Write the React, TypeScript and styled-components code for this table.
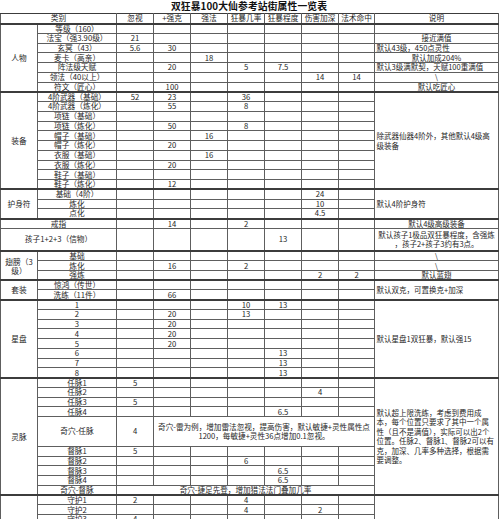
import React from "react";
import styled, { createGlobalStyle, css } from "styled-components";

const GlobalStyle = createGlobalStyle`
  html, body {
    margin: 0;
    padding: 0;
    background: #fff;
    overflow: hidden;
  }
  body {
    font-family: "Noto Sans CJK SC", "Noto Sans", sans-serif;
    color: #1e1e1e;
  }
`;

type Align = "left" | "center";

type RowDef = {
  group?: { text: string; span: number };
  item: string;
  wideItem?: boolean;
  vals?: string[];
  wide?: { from: number; text: string };
  note?: { text: string; span?: number; align?: Align };
  h?: number;
  sep?: boolean;
};

const E = "";
const ROW = 9.75;

const headers = ["忽视", "+强克", "强法", "狂暴几率", "狂暴程度", "伤害加深", "法术命中"];
const colWidths = [37, 79, 37, 37, 37, 37, 37, 37, 36, 124];

const rows: RowDef[] = [
  // 人物
  { group: { text: "人物", span: 7 }, item: "等级（160）", note: { text: "" }, sep: true },
  { item: "法宝（强3.90级）", vals: ["21"], note: { text: "接近满值" } },
  { item: "玄冥（43）", vals: ["5.6", "30"], note: { text: "默认43级，450点灵性", align: "left" } },
  { item: "麦卡（高亲）", vals: [E, E, "18"], note: { text: "默认加成204%" } },
  { item: "阵法级天赋", vals: [E, "20", E, "5", "7.5"], note: { text: "默认3级满默契，天赋100重满值", align: "left" } },
  { item: "领法（40以上）", vals: [E, E, E, E, E, "14", "14"], note: { text: "\\" } },
  { item: "符文（匠心）", vals: [E, "100"], note: { text: "默认吃匠心" } },
  // 装备
  {
    group: { text: "装备", span: 10 },
    item: "4阶武器（基础）",
    vals: ["52", "23", E, "36"],
    note: { text: "除武器仙器4阶外，其他默认4级高\n级装备", span: 10, align: "left" },
    sep: true,
  },
  { item: "4阶武器（炼化）", vals: [E, "55", E, "8"] },
  { item: "项链（基础）" },
  { item: "项链（炼化）", vals: [E, "50", E, "8"] },
  { item: "帽子（基础）", vals: [E, E, "16"] },
  { item: "帽子（炼化）", vals: [E, "20"] },
  { item: "衣服（基础）", vals: [E, E, "16"] },
  { item: "衣服（炼化）", vals: [E, "20"] },
  { item: "鞋子（基础）" },
  { item: "鞋子（炼化）", vals: [E, "12"] },
  // 护身符
  {
    group: { text: "护身符", span: 3 },
    item: "基础（4阶）",
    vals: [E, E, E, E, E, "24"],
    note: { text: "默认4阶护身符", span: 3, align: "left" },
    sep: true,
  },
  { item: "炼化", vals: [E, E, E, E, E, "10"] },
  { item: "点化", vals: [E, E, E, E, E, "4.5"] },
  // 戒指 / 孩子
  { item: "戒指", wideItem: true, vals: [E, "14", E, "2"], note: { text: "默认4级高级装备" }, sep: true },
  {
    item: "孩子1+2+3（信物）",
    wideItem: true,
    vals: [E, E, E, E, "13"],
    note: { text: "默认孩子1极品双狂暴程度，含强炼\n，孩子2+孩子3约有3点。" },
    h: 22.7,
  },
  // 翅膀
  { group: { text: "翅膀（3级）", span: 3 }, item: "基础", note: { text: "\\" }, sep: true },
  { item: "炼化", vals: [E, "16", E, "2"], note: { text: "\\" } },
  { item: "强炼", vals: [E, E, E, E, E, "2", "2"], note: { text: "默认蓝翅" } },
  // 套装
  {
    group: { text: "套装", span: 2 },
    item: "惊鸿（传世）",
    note: { text: "默认双克，可置换克+加深", span: 2, align: "left" },
    sep: true,
  },
  { item: "洗练（11件）", vals: [E, "66"] },
  // 星盘
  {
    group: { text: "星盘", span: 8 },
    item: "1",
    vals: [E, E, E, "10", "13"],
    note: { text: "默认星盘1双狂暴，默认强15", span: 8, align: "left" },
    sep: true,
  },
  { item: "2", vals: [E, "20", E, "13"] },
  { item: "3", vals: [E, "20"] },
  { item: "4", vals: [E, "20"] },
  { item: "5", vals: [E, "20"] },
  { item: "6", vals: [E, E, E, E, "13"] },
  { item: "7", vals: [E, E, E, E, "13"] },
  { item: "8", vals: [E, E, E, E, "13"] },
  // 灵脉
  {
    group: { text: "灵脉", span: 10 },
    item: "任脉1",
    vals: ["5"],
    note: {
      text:
        "默认超上限洗练，考虑到费用成\n本，每个位置只要求了其中一个属\n性（且不是满值），实际可以出2个\n位置。任脉2、督脉1、督脉2可以有\n克，加深、几率多种选择，根据需\n要调整。",
      span: 10,
      align: "left",
    },
    sep: true,
  },
  { item: "任脉2", vals: [E, E, E, E, E, "4"] },
  { item: "任脉3", vals: ["5"] },
  { item: "任脉4", vals: [E, E, E, E, "6.5"] },
  {
    item: "奇穴-任脉",
    vals: ["4"],
    wide: {
      from: 1,
      text: "奇穴-雷为例，增加雷法忽视，提高伤害，默认敏捷+灵性属性点\n1200，每敏捷+灵性36点增加0.1忽视。",
    },
    h: 29.6,
  },
  { item: "督脉1", vals: ["5"] },
  { item: "督脉2", vals: [E, E, E, "6"] },
  { item: "督脉3", vals: [E, E, E, E, "6.5"] },
  { item: "督脉4", vals: [E, E, E, E, "6.5"] },
  { item: "奇穴-督脉", wide: { from: 0, text: "奇穴-捷足先登，增加猎法法门叠加几率" } },
  // 守护
  {
    group: { text: "守护", span: 6 },
    item: "守护1",
    vals: ["2", E, E, "4"],
    note: { text: "", span: 6 },
    sep: true,
  },
  { item: "守护2", vals: [E, E, E, "4", E, "2"] },
  { item: "守护3", vals: ["4"] },
  { item: "守护4" },
  { item: "守护5" },
  { item: "奇穴-守护" },
];

const Page = styled.div`
  width: 498px;
`;

const Title = styled.div`
  height: 13px;
  line-height: 13px;
  font-size: 9.8px;
  font-weight: 700;
  text-align: center;
  color: #111;
  letter-spacing: 0.1px;
`;

const Sheet = styled.table`
  width: 498px;
  table-layout: fixed;
  border-collapse: collapse;
`;

const Col = styled.col<{ $w: number }>`
  width: ${(p) => p.$w}px;
`;

const Row = styled.tr<{ $h: number; $sep?: boolean }>`
  height: ${(p) => p.$h}px;
  ${(p) =>
    p.$sep &&
    css`
      & > td {
        border-top: 2px solid #3c3c3c;
      }
    `}
`;

const Cell = styled.td<{ $align?: Align; $multi?: boolean }>`
  border: 1px solid #5e5e5e;
  padding: 0 1px;
  font-size: 7.7px;
  line-height: ${(p) => (p.$multi ? "9.5px" : "8px")};
  text-align: ${(p) => p.$align ?? "center"};
  vertical-align: middle;
  white-space: pre-line;
  overflow: hidden;
`;

const HeadCell = styled(Cell)`
  border-top: 1px solid #3c3c3c;
`;

const GroupCell = styled(Cell)`
  padding: 0 2px;
  line-height: 9px;
`;

const NoteCell = styled(Cell)`
  font-size: 7.5px;
  padding: 0 0 0 ${(p) => (p.$align === "left" ? "1.5px" : "0")};
`;

const WideCell = styled(Cell)`
  font-size: 7.6px;
`;

function SheetRow({ r }: { r: RowDef }) {
  const vals = r.vals ?? [];
  const valCells: React.ReactNode[] = [];
  const end = r.wide ? r.wide.from : 7;
  for (let i = 0; i < end; i++) valCells.push(<Cell key={i}>{vals[i] ?? ""}</Cell>);
  return (
    <Row $h={r.h ?? ROW} $sep={r.sep}>
      {r.group && <GroupCell rowSpan={r.group.span}>{r.group.text}</GroupCell>}
      <Cell colSpan={r.wideItem ? 2 : 1}>{r.item}</Cell>
      {valCells}
      {r.wide && (
        <WideCell colSpan={7 - r.wide.from} $multi={r.wide.text.includes("\n")}>
          {r.wide.text}
        </WideCell>
      )}
      {r.note && (
        <NoteCell rowSpan={r.note.span ?? 1} $align={r.note.align} $multi={r.note.text.includes("\n")}>
          {r.note.text}
        </NoteCell>
      )}
    </Row>
  );
}

export default function App() {
  return (
    <Page>
      <GlobalStyle />
      <Title>双狂暴100大仙参考站街属性一览表</Title>
      <Sheet>
        <colgroup>
          {colWidths.map((w, i) => (
            <Col key={i} $w={w} />
          ))}
        </colgroup>
        <tbody>
          <Row $h={10}>
            <HeadCell colSpan={2}>类别</HeadCell>
            {headers.map((h) => (
              <HeadCell key={h}>{h}</HeadCell>
            ))}
            <HeadCell>说明</HeadCell>
          </Row>
          {rows.map((r, i) => (
            <SheetRow key={i} r={r} />
          ))}
        </tbody>
      </Sheet>
    </Page>
  );
}
